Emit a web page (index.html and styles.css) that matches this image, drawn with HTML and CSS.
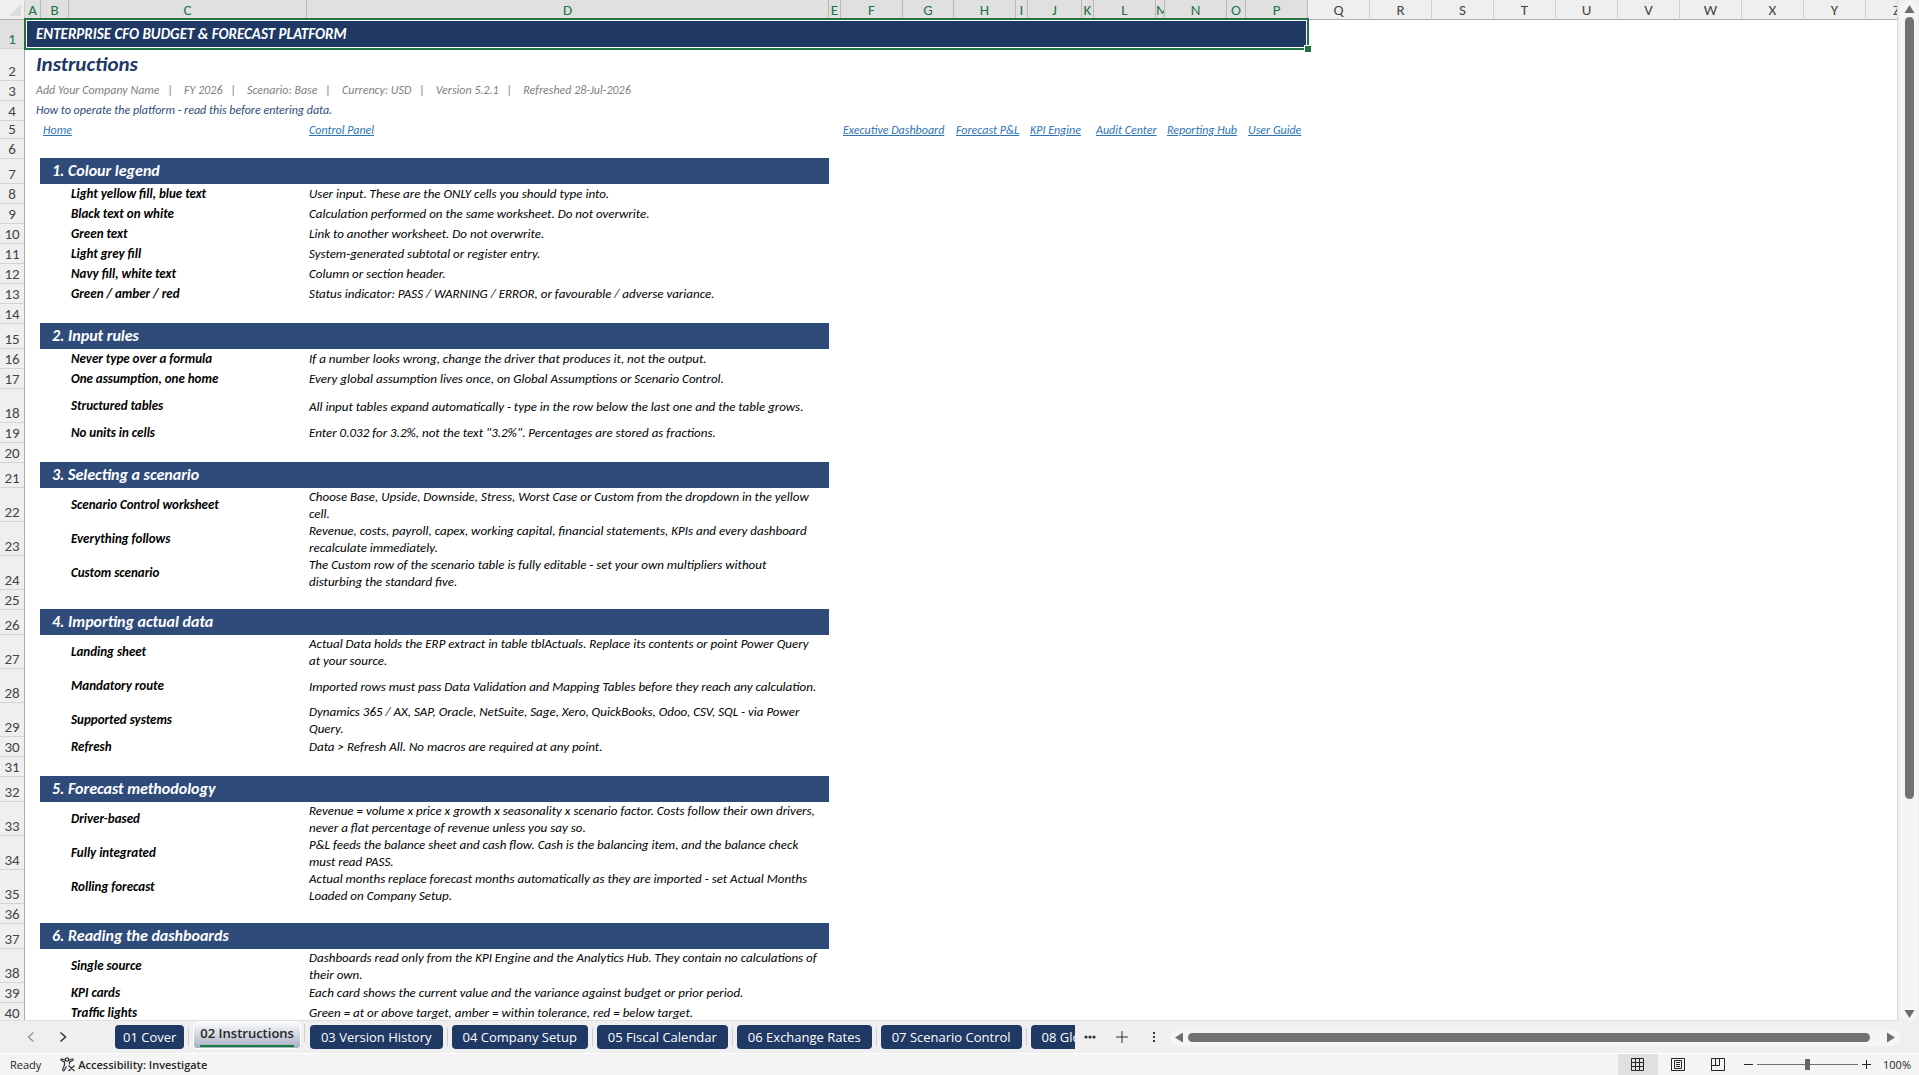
FILE: index.html
```html
<!DOCTYPE html>
<html lang="en">
<head>
    <meta charset="UTF-8">
    <meta name="viewport" content="width=device-width, initial-scale=1.0">
    <title>Enterprise CFO Budget &amp; Forecast Platform</title>
    <link rel="stylesheet" href="styles.css">
</head>
<body>
    <main class="workspace">
        <div class="sheet">
            <table class="grid">
                <colgroup>
                    <col class="w-head"><col class="w-a"><col class="w-b"><col class="w-c"><col class="w-d">
                    <col class="w-gap"><col class="w-std"><col class="w-g"><col class="w-std"><col class="w-gap">
                    <col class="w-j"><col class="w-gap"><col class="w-std"><col class="w-m"><col class="w-std">
                    <col class="w-o"><col class="w-std"><col class="w-std"><col class="w-std"><col class="w-std">
                    <col class="w-std"><col class="w-std"><col class="w-std"><col class="w-std"><col class="w-std">
                    <col class="w-std"><col class="w-std">
                </colgroup>
                <thead>
                    <tr>
                        <th class="corner"><svg width="12" height="12" viewBox="0 0 12 12"><path d="M12 0v12H0z" fill="#dcdcdc"/></svg></th>
                        <th class="on">A</th><th class="on">B</th><th class="on">C</th><th class="on">D</th>
                        <th class="on">E</th><th class="on">F</th><th class="on">G</th><th class="on">H</th>
                        <th class="on">I</th><th class="on">J</th><th class="on">K</th><th class="on">L</th>
                        <th class="on">M</th><th class="on">N</th><th class="on">O</th><th class="on">P</th>
                        <th>Q</th><th>R</th><th>S</th><th>T</th><th>U</th><th>V</th><th>W</th><th>X</th><th>Y</th><th>Z</th>
                    </tr>
                </thead>
                <tbody>
                    <tr class="r-banner"><th class="on">1</th><td class="banner" colspan="16">ENTERPRISE CFO BUDGET &amp; FORECAST PLATFORM<span class="selection"></span></td></tr>
                    <tr class="r-title"><th>2</th><td class="title" colspan="16">Instructions</td></tr>
                    <tr><th>3</th><td class="meta" colspan="16">Add Your Company Name &nbsp; | &nbsp;&nbsp; FY 2026 &nbsp; | &nbsp;&nbsp; Scenario: Base &nbsp; | &nbsp;&nbsp; Currency: USD &nbsp; | &nbsp;&nbsp; Version 5.2.1 &nbsp; | &nbsp;&nbsp; Refreshed 28-Jul-2026</td></tr>
                    <tr><th>4</th><td class="note" colspan="16">How to operate the platform - read this before entering data.</td></tr>
                    <tr class="r-nav">
                        <th>5</th><td></td><td><a href="#">Home</a></td><td></td><td><a href="#">Control Panel</a></td><td></td>
                        <td><a href="#">Executive Dashboard</a></td><td></td><td><a href="#">Forecast P&amp;L</a></td><td></td>
                        <td><a href="#">KPI Engine</a></td><td></td><td><a href="#">Audit Center</a></td><td></td>
                        <td><a href="#">Reporting Hub</a></td><td></td><td><a href="#">User Guide</a></td>
                    </tr>
                    <tr><th>6</th></tr>

                    <tr class="r-section"><th>7</th><td></td><td class="section" colspan="3">1. Colour legend</td></tr>
                    <tr><th>8</th><td colspan="2"></td><td class="label">Light yellow fill, blue text</td><td>User input. These are the ONLY cells you should type into.</td></tr>
                    <tr><th>9</th><td colspan="2"></td><td class="label">Black text on white</td><td>Calculation performed on the same worksheet. Do not overwrite.</td></tr>
                    <tr><th>10</th><td colspan="2"></td><td class="label">Green text</td><td>Link to another worksheet. Do not overwrite.</td></tr>
                    <tr><th>11</th><td colspan="2"></td><td class="label">Light grey fill</td><td>System-generated subtotal or register entry.</td></tr>
                    <tr><th>12</th><td colspan="2"></td><td class="label">Navy fill, white text</td><td>Column or section header.</td></tr>
                    <tr><th>13</th><td colspan="2"></td><td class="label">Green / amber / red</td><td>Status indicator: PASS / WARNING / ERROR, or favourable / adverse variance.</td></tr>
                    <tr><th>14</th></tr>

                    <tr class="r-section"><th>15</th><td></td><td class="section" colspan="3">2. Input rules</td></tr>
                    <tr><th>16</th><td colspan="2"></td><td class="label">Never type over a formula</td><td>If a number looks wrong, change the driver that produces it, not the output.</td></tr>
                    <tr><th>17</th><td colspan="2"></td><td class="label">One assumption, one home</td><td>Every global assumption lives once, on Global Assumptions or Scenario Control.</td></tr>
                    <tr class="r-tall"><th>18</th><td colspan="2"></td><td class="label">Structured tables</td><td>All input tables expand automatically - type in the row below the last one and the table grows.</td></tr>
                    <tr><th>19</th><td colspan="2"></td><td class="label">No units in cells</td><td>Enter 0.032 for 3.2%, not the text "3.2%". Percentages are stored as fractions.</td></tr>
                    <tr><th>20</th></tr>

                    <tr class="r-section"><th>21</th><td></td><td class="section" colspan="3">3. Selecting a scenario</td></tr>
                    <tr class="r-tall"><th>22</th><td colspan="2"></td><td class="label">Scenario Control worksheet</td><td>Choose Base, Upside, Downside, Stress, Worst Case or Custom from the dropdown in the yellow<br>cell.</td></tr>
                    <tr class="r-tall"><th>23</th><td colspan="2"></td><td class="label">Everything follows</td><td>Revenue, costs, payroll, capex, working capital, financial statements, KPIs and every dashboard<br>recalculate immediately.</td></tr>
                    <tr class="r-tall"><th>24</th><td colspan="2"></td><td class="label">Custom scenario</td><td>The Custom row of the scenario table is fully editable - set your own multipliers without<br>disturbing the standard five.</td></tr>
                    <tr><th>25</th></tr>

                    <tr class="r-section"><th>26</th><td></td><td class="section" colspan="3">4. Importing actual data</td></tr>
                    <tr class="r-tall"><th>27</th><td colspan="2"></td><td class="label">Landing sheet</td><td>Actual Data holds the ERP extract in table tblActuals. Replace its contents or point Power Query<br>at your source.</td></tr>
                    <tr class="r-tall"><th>28</th><td colspan="2"></td><td class="label">Mandatory route</td><td>Imported rows must pass Data Validation and Mapping Tables before they reach any calculation.</td></tr>
                    <tr class="r-tall"><th>29</th><td colspan="2"></td><td class="label">Supported systems</td><td>Dynamics 365 / AX, SAP, Oracle, NetSuite, Sage, Xero, QuickBooks, Odoo, CSV, SQL - via Power<br>Query.</td></tr>
                    <tr><th>30</th><td colspan="2"></td><td class="label">Refresh</td><td>Data &gt; Refresh All. No macros are required at any point.</td></tr>
                    <tr><th>31</th></tr>

                    <tr class="r-section"><th>32</th><td></td><td class="section" colspan="3">5. Forecast methodology</td></tr>
                    <tr class="r-tall"><th>33</th><td colspan="2"></td><td class="label">Driver-based</td><td>Revenue = volume x price x growth x seasonality x scenario factor. Costs follow their own drivers,<br>never a flat percentage of revenue unless you say so.</td></tr>
                    <tr class="r-tall"><th>34</th><td colspan="2"></td><td class="label">Fully integrated</td><td>P&amp;L feeds the balance sheet and cash flow. Cash is the balancing item, and the balance check<br>must read PASS.</td></tr>
                    <tr class="r-tall"><th>35</th><td colspan="2"></td><td class="label">Rolling forecast</td><td>Actual months replace forecast months automatically as they are imported - set Actual Months<br>Loaded on Company Setup.</td></tr>
                    <tr><th>36</th></tr>

                    <tr class="r-section"><th>37</th><td></td><td class="section" colspan="3">6. Reading the dashboards</td></tr>
                    <tr class="r-tall"><th>38</th><td colspan="2"></td><td class="label">Single source</td><td>Dashboards read only from the KPI Engine and the Analytics Hub. They contain no calculations of<br>their own.</td></tr>
                    <tr><th>39</th><td colspan="2"></td><td class="label">KPI cards</td><td>Each card shows the current value and the variance against budget or prior period.</td></tr>
                    <tr><th>40</th><td colspan="2"></td><td class="label">Traffic lights</td><td>Green = at or above target, amber = within tolerance, red = below target.</td></tr>
                </tbody>
            </table>
        </div>
        <div class="vscroll">
            <button class="arrow" aria-label="Scroll up"><svg width="11" height="8" viewBox="0 0 11 8"><path d="M5.500 0L10.500 8H0.500z"/></svg></button>
            <div class="vtrack"><div class="vthumb"></div></div>
            <button class="arrow" aria-label="Scroll down"><svg width="11" height="8" viewBox="0 0 11 8"><path d="M5.500 8L10.500 0H0.500z"/></svg></button>
        </div>
    </main>

    <nav class="tabbar">
        <div class="tab-arrows">
            <button aria-label="Previous sheet" class="dim"><svg width="8" height="12" viewBox="0 0 8 12"><path d="M6.500 1.500L1.500 6l5 4.500"/></svg></button>
            <button aria-label="Next sheet"><svg width="8" height="12" viewBox="0 0 8 12"><path d="M1.500 1.500L6.500 6l-5 4.500"/></svg></button>
        </div>
        <div class="tabs">
            <button class="tab">01 Cover</button>
            <button class="tab active"><span>02 Instructions</span></button>
            <button class="tab">03 Version History</button>
            <button class="tab">04 Company Setup</button>
            <button class="tab">05 Fiscal Calendar</button>
            <button class="tab">06 Exchange Rates</button>
            <button class="tab">07 Scenario Control</button>
            <button class="tab">08 Global Assumptions</button>
        </div>
        <div class="tab-tools">
            <button aria-label="More sheets"><svg width="12" height="12" viewBox="0 0 12 12"><circle cx="2" cy="6" r="1.600"/><circle cx="6" cy="6" r="1.600"/><circle cx="10" cy="6" r="1.600"/></svg></button>
            <button aria-label="New sheet"><svg width="12" height="12" viewBox="0 0 12 12"><path d="M5.500 0h1v5.500H12v1H6.500V12h-1V6.500H0v-1h5.500z"/></svg></button>
            <button aria-label="Resize tabs"><svg width="12" height="12" viewBox="0 0 12 12"><path d="M5 1h2v2H5zM5 5h2v2H5zM5 9h2v2H5z"/></svg></button>
        </div>
        <div class="hscroll">
            <button class="arrow" aria-label="Scroll left"><svg width="8" height="11" viewBox="0 0 8 11"><path d="M0 5.500L8 0.500v10z"/></svg></button>
            <div class="htrack"><div class="hthumb"></div></div>
            <button class="arrow" aria-label="Scroll right"><svg width="8" height="11" viewBox="0 0 8 11"><path d="M8 5.500L0 0.500v10z"/></svg></button>
        </div>
    </nav>

    <footer class="status">
        <span class="ready">Ready</span>
        <button class="access">
            <svg width="16" height="15" viewBox="0 0 16 15" fill="none" stroke="#333" stroke-width="1.200">
                <circle cx="7" cy="2.500" r="1.700"/>
                <path d="M5.300 3.300L2 2C0.900 1.700 0.500 3 1.400 3.500L4.500 5v3L2.700 12.600c-.3 1.200 1.100 1.700 1.600.700L6.500 9.500M8.700 3.300L12 2c1.100-.3 1.500 1 .600 1.500L9.500 5v2.500M8.500 8.500l6 5.500M14.500 8.500l-6 5.500"/>
            </svg>
            Accessibility: Investigate
        </button>
        <div class="views">
            <button class="view on" aria-label="Normal"><svg width="14" height="14" viewBox="0 0 14 14"><path d="M.5.500h12v12H.5zM4.500.500v12M8.500.500v12M.5 4.500h12M.5 8.500h12"/></svg></button>
            <button class="view" aria-label="Page layout"><svg width="14" height="14" viewBox="0 0 14 14"><path d="M.5.500h13v12H.5zM3.500 2.500h7v8h-7zM5 4.500h4M5 6.500h4M5 8.500h4"/></svg></button>
            <button class="view" aria-label="Page break preview"><svg width="14" height="14" viewBox="0 0 14 14"><path d="M.5.500h13v12H.5zM4.500.500v7M8.500.500v7M.5 7.500h8"/></svg></button>
        </div>
        <div class="zoom">
            <button aria-label="Zoom out"><svg width="9" height="9" viewBox="0 0 9 9"><path d="M0 4.500h9"/></svg></button>
            <input type="range" min="10" max="190" value="100" aria-label="Zoom">
            <button aria-label="Zoom in"><svg width="9" height="9" viewBox="0 0 9 9"><path d="M0 4.500h9M4.500 0v9"/></svg></button>
        </div>
        <button class="percent">100%</button>
    </footer>
</body>
</html>
```
FILE: styles.css
```css
*{
    box-sizing: border-box;
}
body{
    margin: 0;
    height: 100vh;
    display: flex;
    flex-direction: column;
    overflow: hidden;
    background-color: #efefef;
    color: #262626;
    font-family: 'Segoe UI', 'Open Sans', sans-serif;
}
button{
    margin: 0;
    padding: 0;
    border: none;
    background: none;
    font: inherit;
    color: inherit;
}
svg{
    display: block;
}

/* worksheet */
.workspace{
    flex: 1;
    min-height: 0;
    display: flex;
}
.sheet{
    flex: 1;
    min-width: 0;
    overflow: hidden;
    background-color: #fff;
    border-right: 1px solid #d8d8d8;
    border-bottom: 1px solid #dcdfdc;
}
.grid{
    table-layout: fixed;
    width: 100%;
    border-collapse: separate;
    border-spacing: 0;
    font-family: Calibri, Lato, sans-serif;
    font-size: 13px;
    line-height: 17px;
    color: #000;
}
.w-head{ width: 25px; }
.w-a{ width: 16px; }
.w-b{ width: 28px; }
.w-c{ width: 238px; }
.w-d{ width: 522px; }
.w-gap{ width: 12px; }
.w-std{ width: 62px; }
.w-g{ width: 51px; }
.w-j{ width: 54px; }
.w-m{ width: 9px; }
.w-o{ width: 19px; }

.grid th{
    padding: 0;
    font-size: 15px;
    font-weight: 400;
    color: #444;
    background-color: #efefef;
}
.grid thead th{
    height: 20px;
    padding-top: 2px;
    overflow: hidden;
    border-right: 1px solid #cfcfcf;
    border-bottom: 1px solid #ababab;
}
.grid thead th.on{
    background-color: #e0e0e0;
    border-right-color: #b8b8b8;
    color: #217346;
}
.grid thead th.corner{
    padding: 0 0 0 9px;
    border-bottom-color: #ababab;
}
.grid tbody tr{
    height: 20px;
}
.grid tbody th{
    vertical-align: bottom;
    border-right: 1px solid #ababab;
    border-bottom: 1px solid #d4d4d4;
}
.grid tbody th.on{
    background-color: #e0e0e0;
    color: #217346;
}
.grid td{
    padding: 0 2px 2px;
    font-style: italic;
    white-space: nowrap;
    vertical-align: middle;
}
.grid tbody .r-banner{ height: 29px; }
.grid tbody .r-title{ height: 32px; }
.grid tbody .r-nav{ height: 18px; }
.grid tbody .r-section{ height: 25px; }
.grid tbody .r-tall{ height: 34px; }

.grid .banner,
.grid .title,
.grid .meta,
.grid .note,
.grid .section{
    padding-left: 11px;
}
.grid .banner,
.grid .r-nav td,
.grid .r-tall td{
    padding-bottom: 0;
}
.grid .banner{
    position: relative;
    background-color: #203864;
    color: #fff;
    font-size: 15px;
    font-weight: 700;
}
.selection{
    position: absolute;
    inset: -2px -1px -1px -1px;
    border: 2px solid #217346;
    box-shadow: inset 0 0 0 1px #fff;
}
.selection::after{
    content: "";
    position: absolute;
    right: -4px;
    bottom: -4px;
    width: 6px;
    height: 6px;
    background-color: #217346;
    border-top: 1px solid #fff;
    border-left: 1px solid #fff;
}
.grid .title{
    color: #203864;
    font-size: 21px;
    font-weight: 700;
    line-height: 24px;
}
.grid .meta,
.grid .note,
.grid .r-nav td{
    font-size: 12px;
}
.grid .meta{
    color: #7f7f7f;
}
.grid .note{
    color: #2f4b7a;
}
.grid a{
    color: #2e75b6;
    text-decoration: underline;
}
.grid .section{
    background-color: #2f4b7a;
    box-shadow: 0 -1px #2f4b7a, -1px 0 #2f4b7a, -1px -1px #2f4b7a;
    color: #fff;
    font-size: 16px;
    font-weight: 700;
}
.grid .label{
    font-weight: 700;
}
.grid .r-tall .label{
    padding-bottom: 2px;
}

/* scroll bars */
.vscroll{
    width: 18px;
    margin: 0 1px 0 2px;
    padding: 2px 0 0;
    display: flex;
    flex-direction: column;
    align-items: center;
    background-color: #f5f5f5;
    border-radius: 9px;
}
.arrow{
    flex: none;
    padding: 3px;
}
.arrow path{
    fill: #6e6e6e;
}
.vtrack{
    flex: 1;
    width: 9px;
    padding-top: 1px;
}
.vthumb{
    height: 79%;
    border-radius: 5px;
    background-color: #717171;
}

/* sheet tabs */
.tabbar{
    height: 32px;
    display: flex;
    align-items: center;
}
.tab-arrows{
    width: 115px;
    padding-left: 27px;
    display: flex;
    gap: 24px;
}
.tab-arrows path{
    fill: none;
    stroke: #333;
    stroke-width: 1.5;
}
.tab-arrows .dim path{
    stroke: #999;
}
.tabs{
    width: 50%;
    height: 32px;
    display: flex;
    align-items: center;
    gap: 9px;
    overflow: hidden;
}
.tab{
    position: relative;
    flex: none;
    height: 24px;
    padding: 0 11px;
    border-radius: 4px;
    background-color: #203864;
    color: #fff;
    font-size: 13px;
    line-height: 24px;
}
.tab:first-child{
    padding: 0 8px;
}
.tab::after{
    content: "";
    position: absolute;
    right: -5px;
    top: 3px;
    width: 1px;
    height: 18px;
    background-color: #cfcfcf;
}
.tab.active{
    align-self: flex-start;
    height: 28px;
    padding: 0 6px;
    border: 1px solid #fff;
    border-top: none;
    background-image: linear-gradient(#fff, #a6afc1);
    color: #262626;
    font-weight: 600;
}
.tab.active span{
    display: block;
    border-bottom: 2px solid #107c41;
    line-height: 23px;
}
.tab-tools{
    width: 95px;
    display: flex;
    justify-content: space-around;
}
.tab-tools svg{
    fill: #333;
}
.hscroll{
    flex: 1;
    height: 17px;
    margin-right: 19px;
    padding: 0 2px;
    display: flex;
    align-items: center;
    background-color: #f5f5f5;
    border-radius: 9px;
}
.htrack{
    flex: 1;
    padding: 0 14px 0 2px;
}
.hthumb{
    height: 9px;
    border-radius: 5px;
    background-color: #717171;
}

/* status bar */
.status{
    height: 22px;
    padding: 0 8px 0 10px;
    display: flex;
    align-items: center;
    background-color: #f4f4f4;
    border-top: 1px solid #fff;
    font-size: 11px;
    line-height: 20px;
}
.access{
    margin-left: 19px;
    margin-right: auto;
    display: flex;
    align-items: center;
    gap: 2px;
    font-weight: 600;
}
.views{
    display: flex;
}
.view{
    width: 40px;
    height: 21px;
    display: flex;
    justify-content: center;
    align-items: center;
}
.view.on{
    background-color: #e0e0e0;
}
.view path,
.zoom path{
    fill: none;
    stroke: #262626;
}
.zoom{
    margin-left: 6px;
    display: flex;
    align-items: center;
    gap: 4px;
}
.zoom input{
    appearance: none;
    width: 101px;
    height: 20px;
    margin: 0;
    background: linear-gradient(#717171, #717171) center / 100% 1px no-repeat;
}
.zoom input::-webkit-slider-thumb{
    appearance: none;
    width: 5px;
    height: 11px;
    background-color: #666;
}
.percent{
    width: 40px;
    text-align: right;
}
```
